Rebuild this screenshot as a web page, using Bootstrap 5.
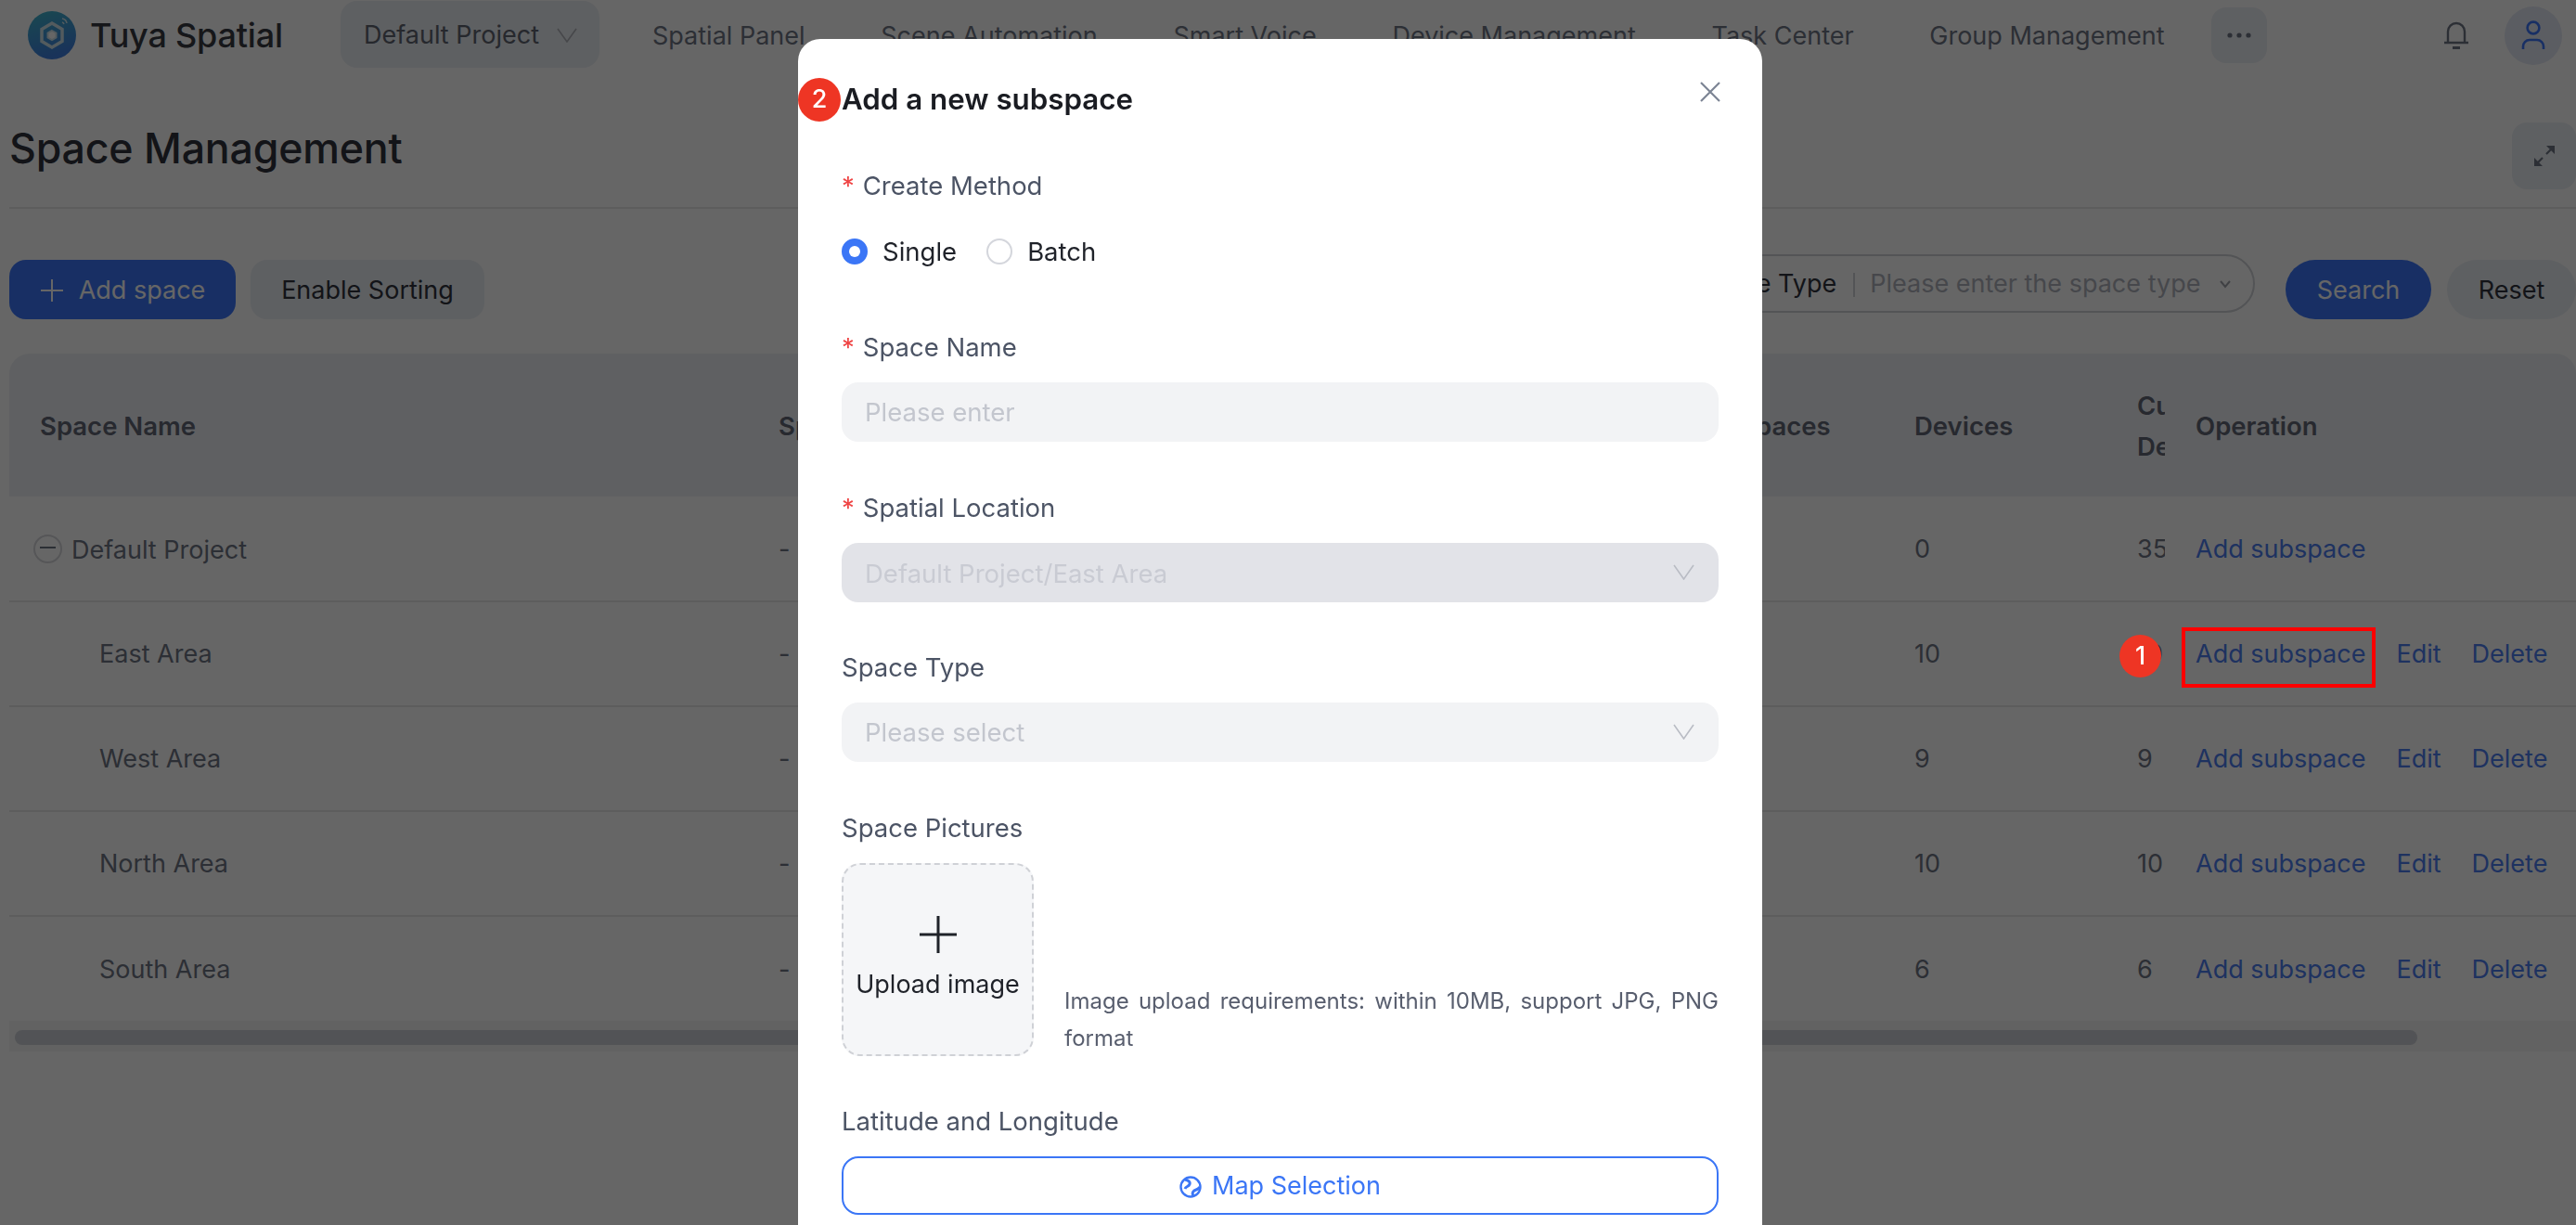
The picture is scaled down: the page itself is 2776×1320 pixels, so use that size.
<!DOCTYPE html>
<html lang="en">
<head>
<meta charset="utf-8">
<title>Space Management</title>
<link href="https://cdn.jsdelivr.net/npm/bootstrap@5.3.0/dist/css/bootstrap.min.css" rel="stylesheet">
<style>
html,body{height:1320px;overflow:hidden;background:#fff;}
body{font-family:Inter,"Liberation Sans",sans-serif;font-size:27px;color:#6f7585;position:relative;width:2776px;}
.topbar{height:76px;padding-left:30px;}
.brand-name{font-size:36px;font-weight:500;color:#373a42;margin-left:15px;width:270px;white-space:nowrap;letter-spacing:-.2px;}
.proj-pill{width:279px;height:72px;background:#ebeff4;border-radius:18px;padding:2px 0 0 25px;color:#606470;margin-right:57px;margin-top:-2px;gap:18px;white-space:nowrap;}
.top-link{margin-right:81.7px;white-space:nowrap;color:#6f7585;padding-top:2px;}
.more-pill{width:60px;height:60px;background:#ebeff4;border-radius:16px;margin-left:-31.7px;}
.bell-slot{margin-left:auto;margin-right:38px;}
.avatar-pill{width:62px;height:63px;border-radius:50%;background:#e4e8f4;margin-right:15px;}
.title-row{margin-left:10px;height:149px;border-bottom:2px solid #e8e8e8;padding-top:54px;}
.page-h{font-size:44.7px;font-weight:500;line-height:60px;color:#30343e;margin:0;letter-spacing:-.2px;white-space:nowrap;}
.expand-pill{width:69px;height:72px;background:#ebeff4;border-radius:16px;margin-top:2px;}
.tool-row{margin-left:10px;margin-top:49px;gap:16px;}
.act-btn{height:64px;border-radius:18px;border:0;font-size:27px;padding:2px 0 0;margin-top:6px;}
.act-primary{background:#3d77fa;color:#fff;width:244px;}
.act-plain{background:#ebeff4;color:#30343e;width:252px;}
.act-search{background:#3d77fa;color:#fff;width:157px;border-radius:32px;margin-left:17px;}
.act-reset{background:#ebeff4;color:#30343e;width:139px;border-radius:32px;margin-left:1px;}
.filter-box{width:632px;height:63px;border:2px solid #cfd1d6;border-radius:32px;margin-left:auto;padding:2px 24px 0 28px;white-space:nowrap;font-size:27px;color:#30343e;}
.filter-sep{width:2px;height:26px;background:#cfd1d6;margin:0 16px 0 18px;}
.filter-ph{color:#aeb2bc;flex:1;}
.grid-wrap{margin:37px 0 0 10px;width:2766px;overflow:hidden;border-radius:22px 22px 0 0;}
.grid-tbl{table-layout:fixed;width:2766px;margin:0;--bs-table-color:#6f7585;--bs-table-bg:transparent;}
.grid-tbl th{height:154px;background:#eef1f5;font-weight:600;font-size:27.5px;color:#626776;border:0;vertical-align:middle;padding:2px 0 0 33px;overflow:hidden;white-space:nowrap;line-height:44px;}
.grid-tbl td{height:113px;border-bottom:2px solid #e8e8e8;vertical-align:middle;padding:2px 0 0 33px;overflow:hidden;white-space:nowrap;color:#6f7585;}
.grid-tbl tr:last-child td{border-bottom:0;}
.grid-tbl .op-cell{box-shadow:-2px 0 0 rgba(0,0,0,.05);}
.op-link{color:#4c7df0;text-decoration:none;margin-right:33px;}
.tree-dash{width:31px;height:31px;margin:0 10px 0 -7px;vertical-align:-5px;}
.tree-root{padding-top:5px!important;}
.tree-indent{padding-left:97px!important;}
.hscroll{margin-left:10px;height:33px;background:#f4f4f4;padding:10px 0 0 6px;width:2766px;}
.hscroll-thumb{height:16px;background:#cdd0d6;border-radius:8px;}
.modal.sheet{overflow:hidden;}
.sheet .modal-dialog{max-width:none;width:1039px;margin:42px 0 0 860px;}
.sheet .modal-content{border:0;border-radius:24px;padding:45px 47px 40px;font-size:27.5px;}
.sheet-title{font-size:31.3px;font-weight:600;line-height:40px;margin:0 0 53px;color:#1a1c22;}
.sheet-close{position:absolute;right:45px;top:46px;padding:0;border:0;background:none;line-height:0;}
.sheet-label{display:block;line-height:40px;color:#4c5465;margin-bottom:18px;}
.sl-first{margin-bottom:31px;}
.sheet-star{color:#ef4444;margin-right:9px;}
.sheet-group{margin-bottom:50.5px;}
.sheet-radio-group{margin-bottom:63px;}
.rg-row{gap:32px;}
.sheet .form-check{min-height:40px;padding:0;margin:0;gap:16px;color:#1f2229;line-height:40px;}
.sheet .form-check-input{width:28px;height:28px;margin:0;float:none;border:2px solid #d4d6dc;}
.sheet .form-check-input:checked{background-color:#3b76f6;border-color:#3b76f6;}
.sheet .form-control{height:64px;border:0;border-radius:18px;background:#f2f3f5;font-size:27.5px;padding:0 25px;}
.sheet .form-control::placeholder{color:#c3c6ce;opacity:1;}
.sheet .form-control.is-locked,.sheet .form-control.is-locked:disabled{background:#e2e3e8;color:#c9cbd3;opacity:1;padding-top:2px;}
.sheet .field-chev{position:absolute;right:26px;top:23px;}
.upload-tile{width:207px;height:208px;background:#f5f6f8;border:2px dashed #cfd1d6;border-radius:20px;flex:none;color:#1f2229;white-space:nowrap;font-size:27px;}
.upload-txt{margin-top:14px;line-height:40px;}
.upload-hint{font-size:24px;line-height:40px;color:#585e6e;text-align:justify;margin-left:33px;margin-bottom:-1px;}
.map-btn{height:63px;border:2px solid #3b76f6;border-radius:18px;color:#3b76f6;font-size:27px;background:#fff;gap:11px;width:100%;padding:2px 0 0;}
.mark-dot{position:absolute;z-index:1060;background:#ee3524;color:#fff;border-radius:50%;font-size:27px;font-weight:500;}
.mark-one{left:2284px;top:684px;width:45px;height:46px;}
.mark-two{left:860px;top:84px;width:46px;height:47px;}
.mark-box{position:absolute;z-index:1060;left:2351px;top:676px;width:209px;height:65px;border:4px solid #f00;}
.modal-backdrop.dim{--bs-backdrop-opacity:.6;}
</style>
</head>
<body>
<header class="topbar d-flex align-items-center">
  <svg width="52" height="52" viewBox="0 0 52 52">
    <defs><linearGradient id="lg" x1="0" y1="0" x2="0.3" y2="1"><stop offset="0" stop-color="#3fb6c9"/><stop offset="1" stop-color="#3f7fe0"/></linearGradient></defs>
    <circle cx="26" cy="26" r="26" fill="url(#lg)"/>
    <path d="M26 13 37 19.5V32.5L26 39 15 32.5V19.5Z" fill="none" stroke="#cfe4ec" stroke-width="3.5"/>
    <path d="M26 21 30.5 23.5V28.5L26 31 21.5 28.5V23.5Z" fill="#fff" stroke="#cfe4ec" stroke-width="2"/>
    <path d="M37 8a6 6 0 0 1 5 5M37 12a3 3 0 0 1 2 2" fill="none" stroke="#cfe4ec" stroke-width="1.5"/>
  </svg>
  <span class="brand-name">Tuya Spatial</span>
  <div class="proj-pill d-flex align-items-center">Default Project
    <svg width="24" height="16" viewBox="0 0 24 16"><path d="M2 1 12 15 22 1" fill="none" stroke="#b0b3ba" stroke-width="1.6"/></svg>
  </div>
  <span class="top-link">Spatial Panel</span>
  <span class="top-link">Scene Automation</span>
  <span class="top-link">Smart Voice</span>
  <span class="top-link">Device Management</span>
  <span class="top-link">Task Center</span>
  <span class="top-link">Group Management</span>
  <div class="more-pill d-flex align-items-center justify-content-center">
    <svg width="26" height="6" viewBox="0 0 26 6"><circle cx="3" cy="3" r="2.6" fill="#6f7585"/><circle cx="13" cy="3" r="2.6" fill="#6f7585"/><circle cx="23" cy="3" r="2.6" fill="#6f7585"/></svg>
  </div>
  <div class="bell-slot d-flex">
    <svg width="28" height="30" viewBox="0 0 28 30"><path d="M1 23h26M5 23V11a9 9 0 0 1 18 0v12" fill="none" stroke="#6f7585" stroke-width="2.4"/><path d="M10 28.5h8" stroke="#6f7585" stroke-width="3"/></svg>
  </div>
  <div class="avatar-pill d-flex align-items-center justify-content-center">
    <svg width="26" height="32" viewBox="0 0 26 32"><circle cx="13" cy="8" r="6.4" fill="none" stroke="#3d77fa" stroke-width="2.6"/><path d="M2 31v-3a7 7 0 0 1 7-7h8a7 7 0 0 1 7 7v3" fill="none" stroke="#3d77fa" stroke-width="2.6"/></svg>
  </div>
</header>

<div class="title-row d-flex justify-content-between align-items-start">
  <h1 class="page-h">Space Management</h1>
  <div class="expand-pill d-flex align-items-center justify-content-center">
    <svg width="24" height="24" viewBox="0 0 24 24"><path d="M14 1h9v9ZM10 23H1v-9Z" fill="#6f7585"/><path d="M19 5l-5 5M5 19l5-5" stroke="#6f7585" stroke-width="2.2"/></svg>
  </div>
</div>

<div class="tool-row d-flex align-items-start">
  <button class="act-btn act-primary d-flex align-items-center justify-content-center gap-3" type="button">
    <svg width="26" height="26" viewBox="0 0 26 26"><path d="M13 1v24M1 13h24" stroke="#fff" stroke-width="2"/></svg>Add space
  </button>
  <button class="act-btn act-plain" type="button">Enable Sorting</button>
  <div class="filter-box d-flex align-items-center">
    <span>Space Type</span><span class="filter-sep"></span><span class="filter-ph">Please enter the space type</span>
    <svg width="12" height="9" viewBox="0 0 12 9"><path d="M1 1 6 7 11 1" fill="none" stroke="#a0a3ab" stroke-width="2"/></svg>
  </div>
  <button class="act-btn act-search" type="button">Search</button>
  <button class="act-btn act-reset" type="button">Reset</button>
</div>

<div class="grid-wrap">
  <table class="table grid-tbl">
    <colgroup><col style="width:796px"><col style="width:986px"><col style="width:238px"><col style="width:240px"><col style="width:63px"><col style="width:443px"></colgroup>
    <thead><tr><th>Space Name</th><th>Space Type</th><th>Subspaces</th><th>Devices</th><th>Current<br>Devices</th><th class="op-cell">Operation</th></tr></thead>
    <tbody>
      <tr><td class="tree-root"><svg class="tree-dash" viewBox="0 0 31 31"><circle cx="15.5" cy="15.5" r="14.5" fill="none" stroke="#d6d7db" stroke-width="2"/><path d="M7 14h17" stroke="#6f7585" stroke-width="2"/></svg>Default Project</td><td>-</td><td>4</td><td>0</td><td>35</td><td class="op-cell"><a class="op-link" href="#">Add subspace</a></td></tr>
      <tr><td class="tree-indent">East Area</td><td>-</td><td>0</td><td>10</td><td>10</td><td class="op-cell"><a class="op-link" href="#">Add subspace</a><a class="op-link" href="#">Edit</a><a class="op-link" href="#">Delete</a></td></tr>
      <tr><td class="tree-indent">West Area</td><td>-</td><td>0</td><td>9</td><td>9</td><td class="op-cell"><a class="op-link" href="#">Add subspace</a><a class="op-link" href="#">Edit</a><a class="op-link" href="#">Delete</a></td></tr>
      <tr><td class="tree-indent">North Area</td><td>-</td><td>0</td><td>10</td><td>10</td><td class="op-cell"><a class="op-link" href="#">Add subspace</a><a class="op-link" href="#">Edit</a><a class="op-link" href="#">Delete</a></td></tr>
      <tr><td class="tree-indent">South Area</td><td>-</td><td>0</td><td>6</td><td>6</td><td class="op-cell"><a class="op-link" href="#">Add subspace</a><a class="op-link" href="#">Edit</a><a class="op-link" href="#">Delete</a></td></tr>
    </tbody>
  </table>
</div>
<div class="hscroll"><div class="hscroll-thumb" style="width:2589px"></div></div>

<div class="modal-backdrop dim show"></div>

<div class="modal sheet d-block" tabindex="-1">
  <div class="modal-dialog">
    <div class="modal-content">
      <h5 class="sheet-title">Add a new subspace</h5>
      <button class="sheet-close" type="button" aria-label="Close"><svg width="22" height="22" viewBox="0 0 22 22"><path d="M1 1 21 21M21 1 1 21" stroke="#7c8494" stroke-width="2.2"/></svg></button>
      <form>
        <div class="sheet-radio-group">
          <label class="sheet-label sl-first"><span class="sheet-star">*</span>Create Method</label>
          <div class="d-flex rg-row">
            <div class="form-check d-flex align-items-center"><input class="form-check-input" type="radio" name="m" checked id="m1"><label for="m1">Single</label></div>
            <div class="form-check d-flex align-items-center"><input class="form-check-input" type="radio" name="m" id="m2"><label for="m2">Batch</label></div>
          </div>
        </div>
        <div class="sheet-group">
          <label class="sheet-label"><span class="sheet-star">*</span>Space Name</label>
          <input class="form-control" placeholder="Please enter">
        </div>
        <div class="sheet-group">
          <label class="sheet-label"><span class="sheet-star">*</span>Spatial Location</label>
          <div class="position-relative">
            <input class="form-control is-locked" value="Default Project/East Area" disabled>
            <svg class="field-chev" width="23" height="17" viewBox="0 0 23 17"><path d="M1 1 11.5 16 22 1" fill="none" stroke="#b9bcc4" stroke-width="1.6"/></svg>
          </div>
        </div>
        <div class="sheet-group">
          <label class="sheet-label">Space Type</label>
          <div class="position-relative">
            <input class="form-control" placeholder="Please select">
            <svg class="field-chev" width="23" height="17" viewBox="0 0 23 17"><path d="M1 1 11.5 16 22 1" fill="none" stroke="#b9bcc4" stroke-width="1.6"/></svg>
          </div>
        </div>
        <div class="sheet-group">
          <label class="sheet-label">Space Pictures</label>
          <div class="d-flex align-items-end">
            <div class="upload-tile d-flex flex-column align-items-center justify-content-center">
              <svg width="40" height="40" viewBox="0 0 40 40"><path d="M20 0v40M0 20h40" stroke="#1f2229" stroke-width="3"/></svg>
              <span class="upload-txt">Upload image</span>
            </div>
            <div class="upload-hint">Image upload requirements: within 10MB, support JPG, PNG format</div>
          </div>
        </div>
        <div>
          <label class="sheet-label">Latitude and Longitude</label>
          <button class="map-btn d-flex align-items-center justify-content-center" type="button">
            <svg width="24" height="24" viewBox="0 0 24 24"><circle cx="12" cy="12" r="10.5" fill="none" stroke="#3b76f6" stroke-width="2.4"/><path d="M6 4c3 1 6 2 5 5s-4 2-5 5M15 22c-2-4 0-6 3-7s3-2 4-3" fill="none" stroke="#3b76f6" stroke-width="3"/></svg>
            Map Selection
          </button>
        </div>
      </form>
    </div>
  </div>
</div>

<div class="mark-box"></div>
<div class="mark-dot mark-one d-flex align-items-center justify-content-center">1</div>
<div class="mark-dot mark-two d-flex align-items-center justify-content-center">2</div>

<script src="https://cdn.jsdelivr.net/npm/bootstrap@5.3.0/dist/js/bootstrap.bundle.min.js"></script>
</body>
</html>
